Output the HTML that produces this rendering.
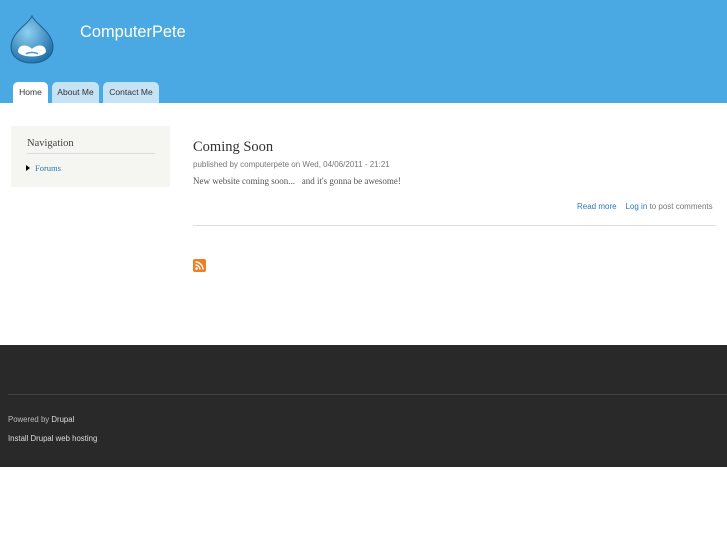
<!DOCTYPE html>
<html><head><meta charset="utf-8"><style>
*{margin:0;padding:0;box-sizing:border-box}
body{width:727px;height:545px;background:#fff;font-family:"Liberation Sans",sans-serif;position:relative;overflow:hidden}
.hdr{position:absolute;left:0;top:0;width:727px;height:103px;background:#4aa8e2}
.site{position:absolute;left:80px;top:23px;color:#fff;font-size:16.4px}
.tab{position:absolute;top:82px;height:21px;border-radius:5px 5px 0 0;font-size:8.5px;color:#333;text-align:center;line-height:20px;background:#c6e3f6}
.side{position:absolute;left:11px;top:126px;width:159px;height:61px;background:#f5f5f1}
.serif{font-family:"Liberation Serif",serif}
a{color:#2a7ab8;text-decoration:none}
.foot{position:absolute;left:0;top:345px;width:727px;height:122px;background:#292929}
</style></head><body>
<div class="hdr">
<svg style="position:absolute;left:9px;top:14px" width="46" height="50" viewBox="0 0 46 50">
<defs><radialGradient id="g" cx="40%" cy="35%" r="70%"><stop offset="0" stop-color="#8fd0f2"/><stop offset="1" stop-color="#1f6fa8"/></radialGradient></defs>
<path d="M23 2 C26 10 44 18 44 33 C44 43 35 49 23 49 C11 49 2 43 2 33 C2 18 20 10 23 2Z" fill="url(#g)" stroke="#1d5f90" stroke-width="1"/>
<path d="M9 38 C9 30 18 30 23 35 C28 30 37 30 37 38 C33 44 13 44 9 38Z" fill="#fff"/>
<path d="M17 40 C20 38 26 38 29 40" stroke="#4a9bd0" stroke-width="1.5" fill="none"/>
</svg>
<div class="site">ComputerPete</div>
<div class="tab" style="left:13px;width:35px;background:#fff">Home</div>
<div class="tab" style="left:52px;width:47px">About Me</div>
<div class="tab" style="left:103px;width:56px">Contact Me</div>
</div>
<div class="side">
<div class="serif" style="position:absolute;left:16px;top:12px;font-size:10.5px;color:#444">Navigation</div>
<div style="position:absolute;left:16px;top:27px;width:128px;border-top:1px solid #ddd"></div>
<div style="position:absolute;left:15px;top:39px;width:0;height:0;border-left:4px solid #000;border-top:3px solid transparent;border-bottom:3px solid transparent"></div>
<div class="serif" style="position:absolute;left:24px;top:37px;font-size:8.5px"><a>Forums</a></div>
</div>
<div class="serif" style="position:absolute;left:193px;top:139px;font-size:14.5px;color:#333">Coming Soon</div>
<div style="position:absolute;left:193px;top:160px;font-size:8px;color:#777">published by computerpete on Wed, 04/06/2011 - 21:21</div>
<div class="serif" style="position:absolute;left:193px;top:176px;font-size:9px;color:#555">New website coming soon...&nbsp;&nbsp; and it's gonna be awesome!</div>
<div style="position:absolute;left:577px;top:202px;font-size:8px;color:#777"><a>Read more</a>&nbsp;&nbsp;&nbsp; <a>Log in</a> to post comments</div>
<div style="position:absolute;left:193px;top:225px;width:523px;border-top:1px solid #ddd"></div>
<svg style="position:absolute;left:193px;top:259px" width="13" height="13" viewBox="0 0 13 13"><rect width="13" height="13" rx="2" fill="#ef7f22"/><circle cx="3.5" cy="9.5" r="1.3" fill="#fff"/><path d="M2.5 6a4.5 4.5 0 0 1 4.5 4.5M2.5 3a7.5 7.5 0 0 1 7.5 7.5" stroke="#fff" stroke-width="1.4" fill="none"/></svg>
<div class="foot">
<div style="position:absolute;left:8px;top:49px;width:719px;border-top:1px solid #444"></div>
<div style="position:absolute;left:8px;top:70px;font-size:7.8px;color:#bbb">Powered by <span style="color:#ddd">Drupal</span></div>
<div style="position:absolute;left:8px;top:89px;font-size:7.8px;color:#ddd">Install Drupal web hosting</div>
</div>
</body></html>
